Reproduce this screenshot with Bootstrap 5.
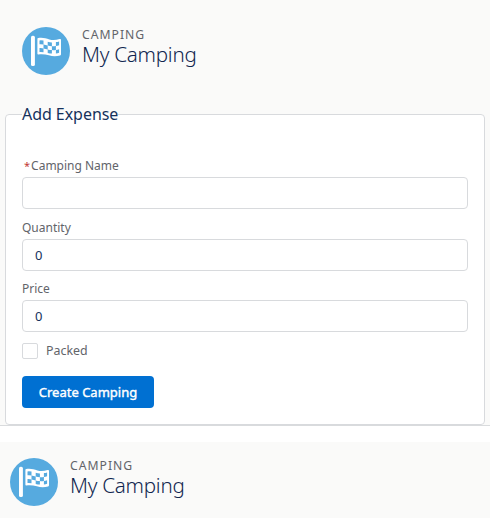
<!DOCTYPE html>
<html lang="en">
<head>
<meta charset="utf-8">
<meta name="viewport" content="width=device-width, initial-scale=1">
<title>My Camping</title>
<link href="https://cdn.jsdelivr.net/npm/bootstrap@5.3.0/dist/css/bootstrap.min.css" rel="stylesheet">
<style>
body{font-family:"Noto Sans","Open Sans",sans-serif;font-size:13px;line-height:20px;color:#16325c;background:#fff;overflow:hidden}
.band{background:#fafaf9}
.top-band{height:426px;border-bottom:1px solid #d9dbdd}
.top-head{height:105px;padding:27px 22px 0}
.low-head{height:76px;padding:16px 10px 0}
.flag{width:48px;height:48px}
.eyebrow{font-size:12.2px;line-height:15px;letter-spacing:1px;color:#62646a}
.title{font-size:20.6px;line-height:25px;font-weight:300;letter-spacing:-.25px;color:#10264f}
.panel{margin:0 5px;height:320px;border:1px solid #d8dadd;border-radius:4px;padding:0 16px;background:#fff}
.panel legend{float:none;width:auto;font-size:16px;line-height:19px;height:19px;margin:0;color:#16325c;letter-spacing:-.05px}
.name-group{padding-top:31px}
.field-label{font-size:12px;line-height:22px;color:#62646a;display:block}
.req{color:#c23934;font-size:11px;margin:0 1px 0 2px}
.field{height:32px;border-color:#d8dadd;padding:0 12px;font-size:13px;color:#16325c;border-radius:4px}
.price-group{margin-top:-1px}
.check{width:16px;height:16px;margin:0;border-color:#d8dadd;border-radius:2px!important}
.packed-row{margin-bottom:14px}
.packed-row .field-label{font-size:12.4px}
.create{width:132px;height:32px;background:#0070d2;font-size:13px;line-height:30px;border-radius:4px;padding:0;color:#fff;-webkit-text-stroke:.4px #fff}
</style>
<script src="https://cdn.jsdelivr.net/npm/bootstrap@5.3.0/dist/js/bootstrap.bundle.min.js"></script>
</head>
<body>
<svg width="0" height="0" class="d-none">
<symbol id="flag" viewBox="0 0 48 48">
<circle cx="24" cy="24" r="24" fill="#56aadf"/>
<rect x="9" y="8.700" width="3.900" height="30.300" rx="1.600" fill="#fff"/>
<path fill="#fff" d="M15.400 12q0-.8.8-.9c4.200-.8 7.600.3 11.200 1.300 3.400.9 6.600.6 10.200-.4q1.400-.3 1.400.8v14.500q0 .8-.9 1.100c-3.900 1.100-7.500 1-11.200-.1-3.800-1-7-1.500-10.600-.8q-.9.100-.9-.8z"/>
<path fill="#56aadf" d="M17.500 13.400q2-.2 4 .2v3.900q-2-.4-4-.2zM21.500 17.500l4.200 1v3.900l-4.200-1zM25.700 14.700q2.100.6 4.200.7v3.900q-2.100-.1-4.200-.8zM29.900 19.300q2 .1 4-.3v3.900q-2 .3-4 .2zM33.900 15q1.700-.1 3.200-.6v3.900q-1.500.5-3.200.7zM17.500 21.100q2-.2 4 .3v3.800q-2-.4-4-.2zM25.700 22.400q2.100.6 4.200.7v3.400q-2.100-.1-4.200-.6zM33.900 22.900q1.700-.2 3.200-.7v3.600q-1.500.5-3.200.6z"/>
</symbol>
</svg>
<main class="band top-band">
<header class="top-head d-flex gap-2">
<svg class="flag flex-shrink-0 me-1"><use href="#flag"/></svg>
<div><div class="eyebrow">CAMPING</div><h1 class="title m-0">My Camping</h1></div>
</header>
<form>
<fieldset class="panel">
<legend>Add Expense</legend>
<div class="name-group mb-2"><label class="field-label" for="name"><span class="req">*</span>Camping Name</label><input id="name" class="form-control field"></div>
<div class="mb-2"><label class="field-label" for="qty">Quantity</label><input id="qty" class="form-control field" value="0"></div>
<div class="price-group mb-2"><label class="field-label" for="price">Price</label><input id="price" class="form-control field" value="0"></div>
<div class="packed-row d-flex align-items-center gap-2"><input id="packed" type="checkbox" class="form-check-input check"><label class="field-label m-0" for="packed">Packed</label></div>
<button type="button" class="btn create">Create Camping</button>
</fieldset>
</form>
</main>
<section class="band low-head d-flex gap-2 mt-3">
<svg class="flag flex-shrink-0 me-1"><use href="#flag"/></svg>
<div><div class="eyebrow">CAMPING</div><h1 class="title m-0">My Camping</h1></div>
</section>
</body>
</html>
